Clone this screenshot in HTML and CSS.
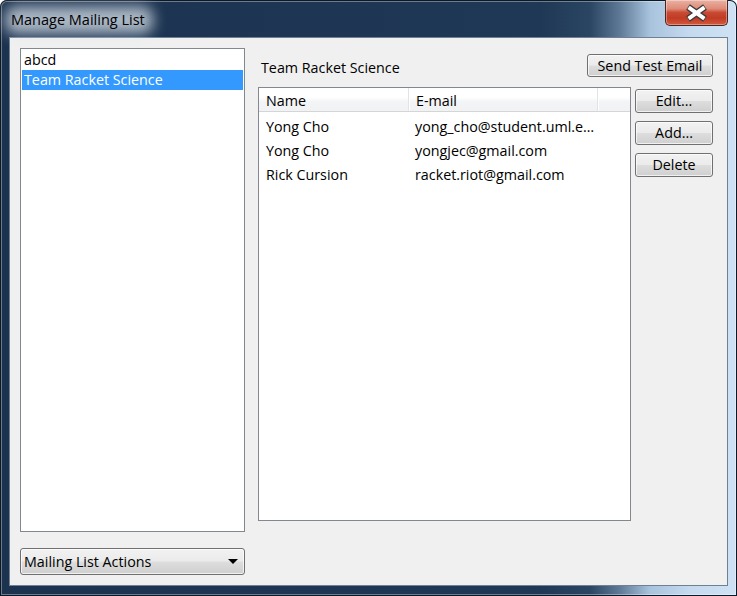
FILE: index.html
```html
<!DOCTYPE html>
<html>
<head>
<meta charset="utf-8">
<link rel="stylesheet" href="styles.css">
</head>
<body>
<div class="window">
  <div class="titlebar">
    <span class="title">Manage Mailing List</span>
    <button class="close" aria-label="Close">
      <svg width="61" height="25" viewBox="0 0 61 25">
        <path d="M22 7 L39 19 M39 7 L22 19" stroke="#3b3b3b" stroke-width="6.5" stroke-linecap="butt" fill="none"/>
        <path d="M22.6 7.4 L38.4 18.6 M38.4 7.4 L22.6 18.6" stroke="#ffffff" stroke-width="4" stroke-linecap="butt" fill="none"/>
      </svg>
    </button>
  </div>
  <div class="client">
    <div class="left">
      <ul class="listbox">
        <li class="item">abcd</li>
        <li class="item selected">Team Racket Science</li>
      </ul>
      <div class="combo">
        <span>Mailing List Actions</span>
        <span class="arrow"></span>
      </div>
    </div>
    <div class="right">
      <div class="head">
        <span class="label">Team Racket Science</span>
        <button class="btn send">Send Test Email</button>
      </div>
      <div class="body">
        <div class="grid">
          <div class="row header">
            <div class="cell">Name</div>
            <div class="cell">E-mail</div>
            <div class="cell"></div>
          </div>
          <div class="rows">
            <div class="row">
              <div class="cell">Yong Cho</div>
              <div class="cell">yong_cho@student.uml.e…</div>
              <div class="cell"></div>
            </div>
            <div class="row">
              <div class="cell">Yong Cho</div>
              <div class="cell">yongjec@gmail.com</div>
              <div class="cell"></div>
            </div>
            <div class="row">
              <div class="cell">Rick Cursion</div>
              <div class="cell">racket.riot@gmail.com</div>
              <div class="cell"></div>
            </div>
          </div>
        </div>
        <div class="actions">
          <button class="btn">Edit...</button>
          <button class="btn">Add...</button>
          <button class="btn">Delete</button>
        </div>
      </div>
    </div>
  </div>
</div>
</body>
</html>
```

FILE: styles.css
```css
html, body {
  margin: 0;
  padding: 0;
  background: #ffffff;
}

body {
  width: 737px;
  height: 596px;
  overflow: hidden;
  font-family: "Open Sans", "Noto Sans", sans-serif;
  font-size: 14.3px;
  color: #000;
}

.window {
  width: 737px;
  height: 596px;
  box-sizing: border-box;
  padding: 0 9px 10px 9px;
  display: flex;
  flex-direction: column;
  border-radius: 7px 7px 0 0;
  background:
    linear-gradient(90deg, #1c3350 0px, #1f3855 540px, #2a4662 590px, #5f7a96 620px, #a8c3dd 650px, #c5daef 690px, #cfe2f5 737px);
  box-shadow: inset 0 0 0 1px #0d1826, inset 0 0 0 2px rgba(255,255,255,0.35);
}

.titlebar {
  height: 37px;
  display: flex;
  justify-content: space-between;
  align-items: flex-start;
  flex: none;
}

.title {
  position: relative;
  margin: 10px 0 0 2px;
  line-height: 20px;
  font-size: 14.5px;
  color: #000;
  z-index: 0;
}

.title::before {
  content: "";
  position: absolute;
  left: -6px;
  right: -8px;
  top: -4px;
  bottom: -4px;
  background: rgba(220, 228, 236, 0.75);
  filter: blur(7px);
  border-radius: 10px;
  z-index: -1;
}

.close {
  width: 63px;
  height: 26px;
  padding: 0;
  margin: 0;
  box-sizing: border-box;
  border: 1px solid #4a2620;
  border-top: none;
  border-radius: 0 0 5px 5px;
  background: linear-gradient(#eab2a4 0%, #de8a77 35%, #c94a33 50%, #c03b24 72%, #d3593f 100%);
  box-shadow: inset 0 0 0 1px rgba(255,255,255,0.35);
  display: flex;
  align-items: center;
  justify-content: center;
}

.close svg {
  display: block;
}

.client {
  flex: 1;
  box-sizing: border-box;
  background: #f0f0f0;
  border: 1px solid #6f8093;
  display: flex;
  padding: 10px 14px 10px 10px;
}

.left {
  width: 225px;
  display: flex;
  flex-direction: column;
  gap: 16px;
}

.listbox {
  flex: 1;
  margin: 0;
  padding: 1px;
  list-style: none;
  background: #fff;
  border: 1px solid #828790;
}

.item {
  height: 20px;
  line-height: 20px;
  padding-left: 2px;
}

.selected {
  background: #3399ff;
  color: #fff;
}

.combo {
  height: 27px;
  box-sizing: border-box;
  border: 1px solid #707070;
  border-radius: 3px;
  background: linear-gradient(#f2f2f2 0%, #ebebeb 48%, #dddddd 52%, #cfcfcf 100%);
  box-shadow: inset 0 0 0 1px rgba(255,255,255,0.7);
  display: flex;
  align-items: center;
  justify-content: space-between;
  padding: 0 6px 0 3px;
  flex: none;
}

.arrow {
  width: 0;
  height: 0;
  border-left: 5px solid transparent;
  border-right: 5px solid transparent;
  border-top: 5px solid #000;
}

.right {
  margin-left: 13px;
  width: 455px;
  display: flex;
  flex-direction: column;
  padding-top: 6px;
}

.head {
  height: 23px;
  display: flex;
  justify-content: space-between;
  align-items: center;
}

.label {
  padding-left: 3px;
  position: relative;
  top: 2px;
}

.btn {
  box-sizing: border-box;
  height: 24px;
  padding: 0;
  border: 1px solid #707070;
  border-radius: 3px;
  background: linear-gradient(#f2f2f2 0%, #ebebeb 48%, #dddddd 52%, #cfcfcf 100%);
  box-shadow: inset 0 0 0 1px rgba(255,255,255,0.7);
  font-family: "Open Sans", "Noto Sans", sans-serif;
  font-size: 14.3px;
  color: #000;
  line-height: 20px;
}

.send {
  width: 126px;
  height: 23px;
}

.body {
  margin-top: 10px;
  display: flex;
  gap: 4px;
  align-items: flex-start;
}

.grid {
  width: 373px;
  height: 434px;
  box-sizing: border-box;
  border: 1px solid #828790;
  background: #fff;
}

.row {
  display: grid;
  grid-template-columns: 149px 189px 1fr;
  height: 24px;
  line-height: 24px;
}

.cell {
  padding-left: 7px;
  white-space: nowrap;
  overflow: hidden;
}

.header {
  height: 24px;
  box-sizing: border-box;
  background: linear-gradient(#ffffff 0%, #ffffff 40%, #f3f4f6 60%, #f1f2f4 100%);
  border-bottom: 1px solid #d5d5d5;
  line-height: 26px;
}

.header .cell + .cell {
  border-left: 1px solid #e2e3e5;
  box-shadow: inset 1px 0 0 #ffffff;
}

.rows {
  padding-top: 3px;
}

.actions {
  width: 78px;
  margin-top: 2px;
  display: flex;
  flex-direction: column;
  gap: 8px;
}

.actions .btn {
  width: 78px;
}
```
